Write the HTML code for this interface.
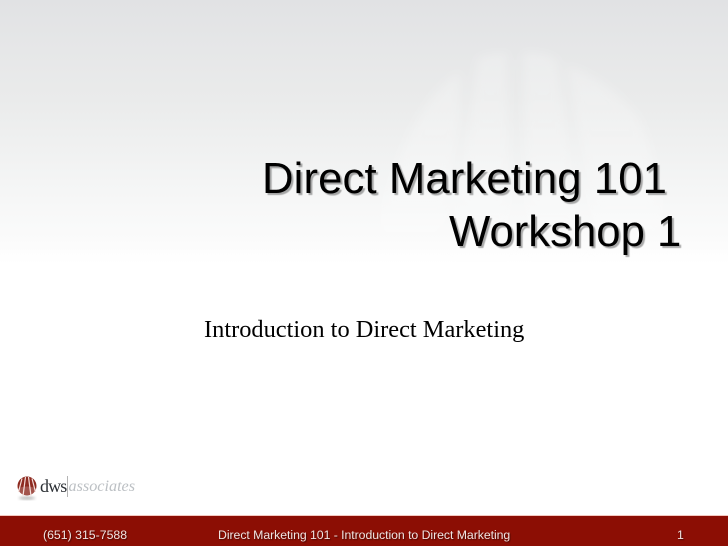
<!DOCTYPE html>
<html><head><meta charset="utf-8">
<style>
html,body{margin:0;padding:0}
#s{position:relative;width:728px;height:546px;overflow:hidden;background:#fff}
#g{position:absolute;left:0;top:0;width:728px;height:264px;background:linear-gradient(#e1e2e4 0,#e6e7e8 50px,#eaebeb 100px,#f0f1f1 150px,#f6f7f7 200px,#fbfbfb 240px,#fff 264px)}
.t{position:absolute;white-space:nowrap;margin:0}
.h{font:43.7px/53px "Liberation Sans",sans-serif;color:#000;text-shadow:2px 2px 1px rgba(0,0,0,.33)}
.f{font:12.3px/16px "Liberation Sans",sans-serif;color:#f0e4e2;text-shadow:1px 1px 1px rgba(0,0,0,.45)}
#b{position:absolute;left:0;top:515px;width:728px;height:31px;background:#8c0e04;border-top:1px solid #f4c8c0;box-sizing:border-box}
</style></head><body><div id="s">
<div id="g"></div>
<svg style="position:absolute;left:0;top:0" width="728" height="264">
<defs>
<filter id="bl" x="-20%" y="-20%" width="140%" height="140%"><feGaussianBlur stdDeviation="5"/></filter>
<linearGradient id="fd" x1="0" y1="0" x2="0" y2="1"><stop offset="0" stop-color="#fff" stop-opacity=".24"/><stop offset=".7" stop-color="#fff" stop-opacity=".22"/><stop offset="1" stop-color="#fff" stop-opacity="0"/></linearGradient>
</defs>
<g filter="url(#bl)" fill="url(#fd)">
<path d="M460 72 Q400 110 372 258 L440 258 L460 120Z"/>
<path d="M478 58 Q495 53 507 53 L510 258 L450 258Z"/>
<path d="M523 53 Q545 52 557 60 L585 258 L528 258Z"/>
<path d="M567 66 Q610 80 640 120 Q662 170 664 258 L600 258Z"/>
</g>
</svg>
<div class="t h" style="left:262px;top:152px;letter-spacing:.1px">Direct Marketing 101</div>
<div class="t h" style="left:449px;top:205px">Workshop 1</div>
<div class="t" style="left:204px;top:315px;font:24.4px/30px 'Liberation Serif',serif;color:#000">Introduction to Direct Marketing</div>
<svg style="position:absolute;left:14px;top:470px" width="30" height="36" viewBox="0 0 30 36">
<defs><filter id="sh"><feGaussianBlur stdDeviation="1.5"/></filter></defs>
<ellipse cx="13" cy="28" rx="8" ry="2" fill="#bbb" filter="url(#sh)"/>
<circle cx="13" cy="16" r="9.5" fill="#8d2a20"/>
<path d="M11.5 7 L9 26 M14.5 7 L17 26 M8 8.5 L4.5 22 M18 8.5 L21.5 22" stroke="#f3dcd8" stroke-width="1.2" fill="none"/>
<path d="M3 19 Q13 14 23 19 L23 27 L3 27Z" fill="#fff" opacity=".2"/>
</svg>
<div class="t" style="left:40px;top:475px;font:18px/22px 'Liberation Serif',serif;color:#2c3035;letter-spacing:-.9px">dws</div>
<div style="position:absolute;left:67px;top:476px;width:1px;height:21px;background:#b4b4b4"></div>
<div class="t" style="left:68.5px;top:476px;font:italic 16.2px/20px 'Liberation Serif',serif;color:#bcc0c4">associates</div>
<div id="b"></div>
<div class="t f" style="left:43px;top:527px">(651) 315-7588</div>
<div class="t f" style="left:218px;top:527px;letter-spacing:-.055px">Direct Marketing 101 - Introduction to Direct Marketing</div>
<div class="t f" style="left:677px;top:527px">1</div>
</div></body></html>
